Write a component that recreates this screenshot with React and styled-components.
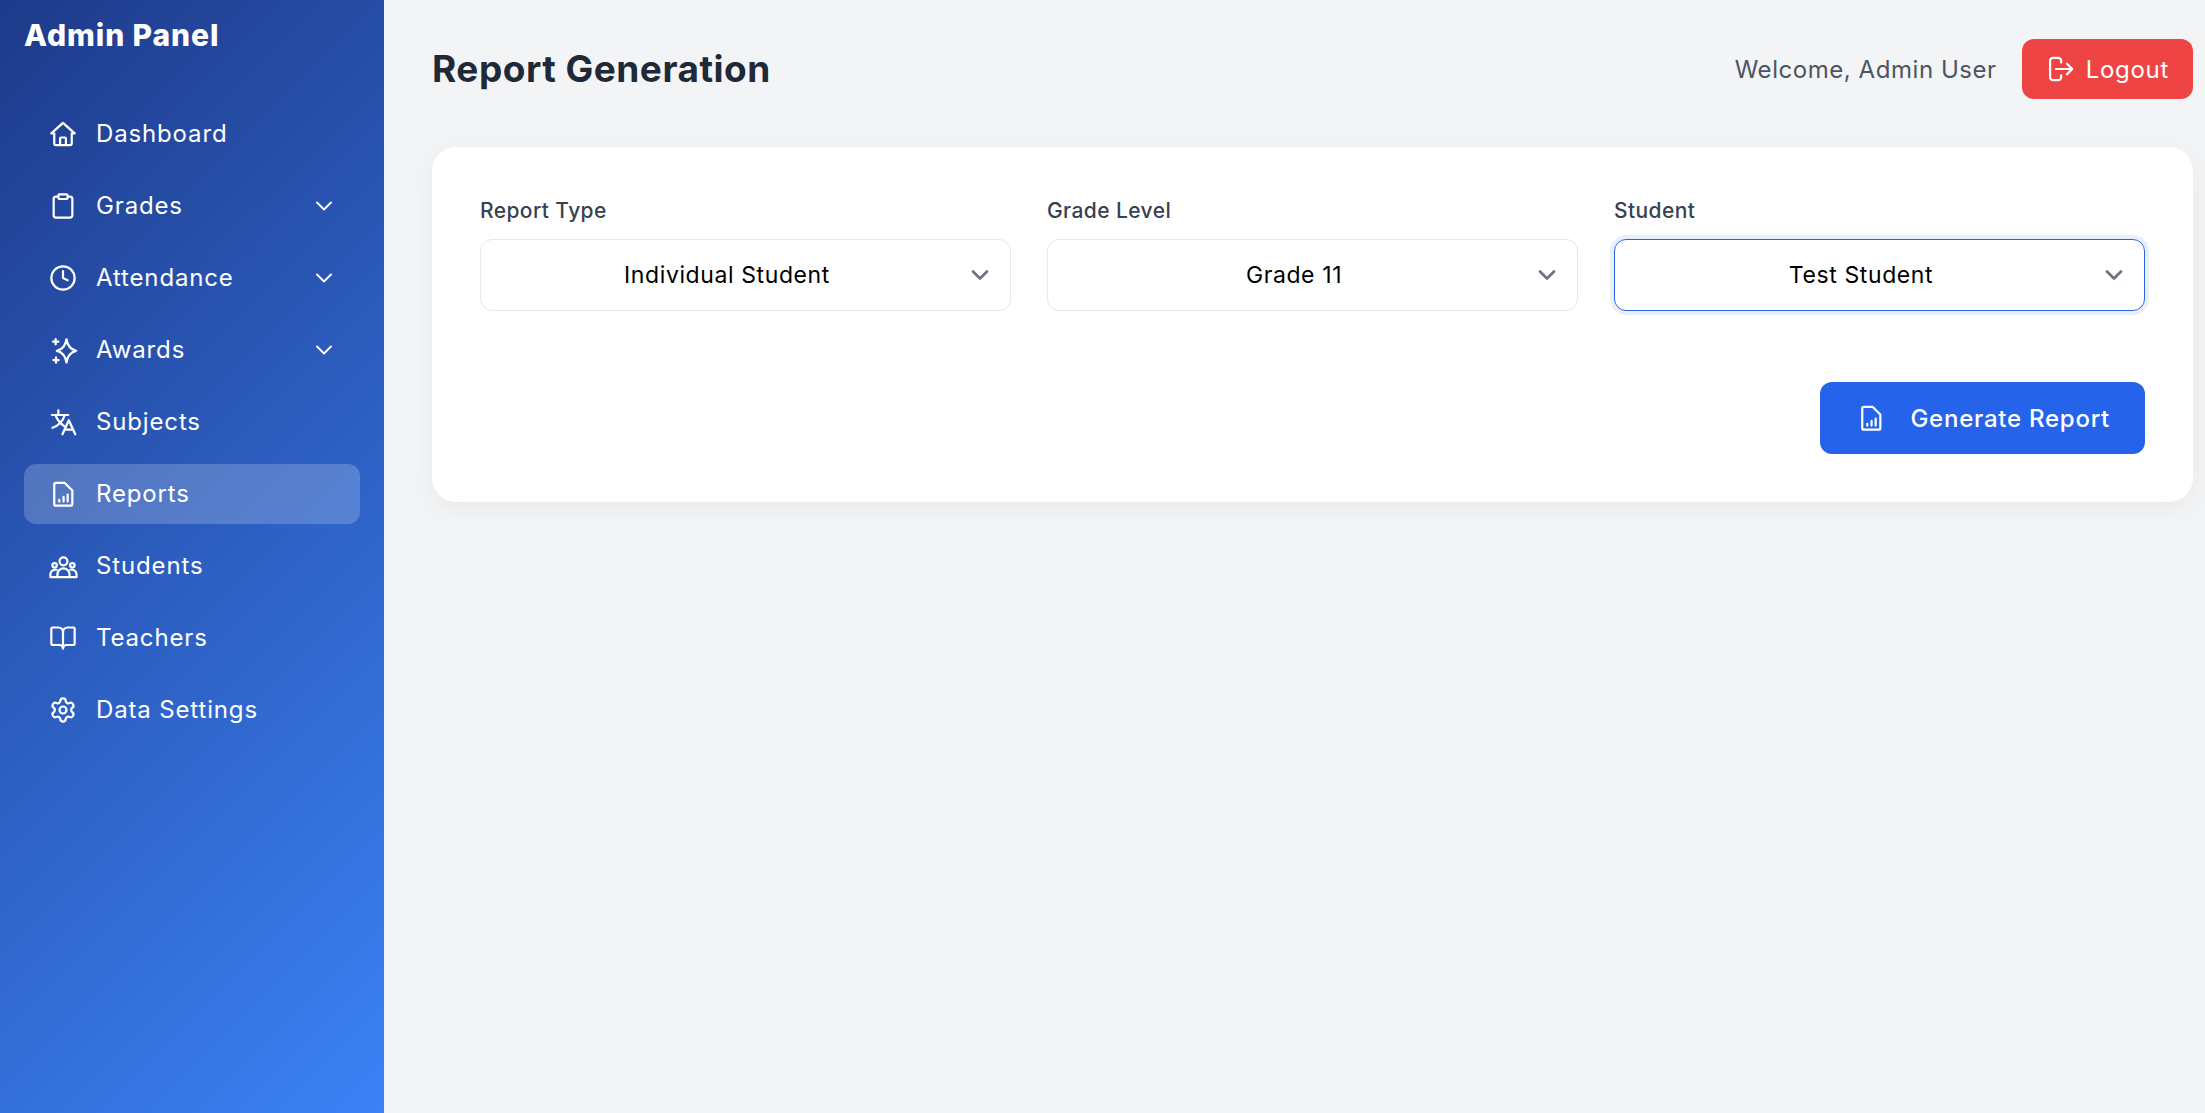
import React from 'react'
import styled, { createGlobalStyle } from 'styled-components'
import { Clipboard, Clock, BookOpen, Settings, ChevronDown } from 'lucide-react'

const GlobalStyle = createGlobalStyle`
    html, body {
        margin: 0;
        height: 100%;
        overflow: hidden;
    }
    body {
        font-family: 'Inter', 'Noto Sans', sans-serif;
        background-color: #F3F4F6;
    }
    * {
        box-sizing: border-box;
    }
`

const strokeProps = {
    viewBox: '0 0 24 24',
    fill: 'none',
    stroke: 'currentColor',
    strokeWidth: 1.9,
    strokeLinecap: 'round',
    strokeLinejoin: 'round',
}

function HomeIcon(props) {
    return (
        <svg {...strokeProps} {...props}>
            <path d="M12 2.5 2 11.5h2.5V20A1.5 1.5 0 0 0 6 21.5h12a1.5 1.5 0 0 0 1.5-1.5v-8.5H22z" />
            <path d="M9.5 21.5V16a1 1 0 0 1 1-1h3a1 1 0 0 1 1 1v5.5" />
        </svg>
    )
}

function SparkleIcon(props) {
    return (
        <svg {...strokeProps} {...props}>
            <path d="M15 2.8C15.8 8 18 11.5 23.3 12.7 18 14 15.8 17.5 15 22.7 14.2 17.5 12 14 6.7 12.7 12 11.5 14.2 8 15 2.8z" />
            <path d="M5.7 2.6v4.6M3.4 4.9H8" />
            <path d="M6 18.3v4.6M3.7 20.6h4.6" />
        </svg>
    )
}

function LanguageIcon(props) {
    return (
        <svg {...strokeProps} {...props}>
            <path d="M8 2v4M2.5 6h14" />
            <path d="M13.5 6c-1.5 5-5 9-10.5 11" />
            <path d="M5.5 6c1.5 4 4 7 7.5 9.5" />
            <path d="M11.5 22.5 17 10.5l5.500 12M13.3 18.500h7.400" />
        </svg>
    )
}

function PeopleIcon(props) {
    return (
        <svg {...strokeProps} {...props}>
            <circle cx="12.4" cy="8" r="3.4" />
            <circle cx="4.8" cy="11.4" r="1.9" />
            <circle cx="20" cy="11.4" r="1.9" />
            <path d="M7.2 21.5v-2.2a5.2 5.2 0 0 1 10.4 0v2.2" />
            <path d="M6.6 15.2C3.6 14.8 1.2 16.5 1.2 19v2.5h22.400V19c0-2.5-2.400-4.200-5.400-3.800" />
        </svg>
    )
}

function ReportIcon(props) {
    return (
        <svg {...strokeProps} {...props}>
            <path d="M6 2.5h7.5L20 9v11.5a1.5 1.5 0 0 1-1.5 1.5H6a1.5 1.5 0 0 1-1.5-1.5V4A1.5 1.5 0 0 1 6 2.500z" />
            <path d="M8.8 18.5V17M12.5 18.5v-4M16 18.5v-6" />
        </svg>
    )
}

function ExitIcon(props) {
    return (
        <svg {...strokeProps} {...props}>
            <path d="M13 6.5V5a2.5 2.5 0 0 0-2.5-2.5H6A2.5 2.5 0 0 0 3.500 5v14A2.500 2.500 0 0 0 6 21.5h4.5A2.5 2.5 0 0 0 13 19v-1.5" />
            <path d="M8.5 12h14M18 7.5l4.5 4.5-4.5 4.5" />
        </svg>
    )
}

const navItems = [
    { label: 'Dashboard', icon: HomeIcon },
    { label: 'Grades', icon: Clipboard, expandable: true },
    { label: 'Attendance', icon: Clock, expandable: true },
    { label: 'Awards', icon: SparkleIcon, expandable: true },
    { label: 'Subjects', icon: LanguageIcon },
    { label: 'Reports', icon: ReportIcon, active: true },
    { label: 'Students', icon: PeopleIcon },
    { label: 'Teachers', icon: BookOpen },
    { label: 'Data Settings', icon: Settings },
]

const filters = [
    { label: 'Report Type', value: 'Individual Student' },
    { label: 'Grade Level', value: 'Grade 11' },
    { label: 'Student', value: 'Test Student', focused: true },
]

function App() {
    return (
        <Layout>
            <GlobalStyle />
            <Sidebar>
                <Brand>Admin Panel</Brand>
                <Nav>
                    {navItems.map((item) => (
                        <NavItem key={item.label} $active={item.active}>
                            <NavIcon as={item.icon} strokeWidth={1.9} />
                            <NavLabel>{item.label}</NavLabel>
                            {item.expandable && <ChevronDown size={28} strokeWidth={1.6} />}
                        </NavItem>
                    ))}
                </Nav>
            </Sidebar>
            <Main>
                <Header>
                    <Title>Report Generation</Title>
                    <UserArea>
                        <Welcome>Welcome, Admin User</Welcome>
                        <LogoutButton>
                            <ButtonIcon as={ExitIcon} />
                            Logout
                        </LogoutButton>
                    </UserArea>
                </Header>
                <Card>
                    <FilterGrid>
                        {filters.map((filter) => (
                            <Field key={filter.label}>
                                <Label>{filter.label}</Label>
                                <Select $focused={filter.focused}>
                                    <SelectValue>{filter.value}</SelectValue>
                                    <SelectArrow as={ChevronDown} strokeWidth={2.3} />
                                </Select>
                            </Field>
                        ))}
                    </FilterGrid>
                    <Actions>
                        <GenerateButton>
                            <ButtonIcon as={ReportIcon} />
                            Generate Report
                        </GenerateButton>
                    </Actions>
                </Card>
            </Main>
        </Layout>
    )
}

const Layout = styled.div`
    display: flex;
    min-height: 100vh;
`

const Sidebar = styled.aside`
    width: 384px;
    flex-shrink: 0;
    padding: 14px 24px;
    color: white;
    background: linear-gradient(135deg, #1E3A8A, #3B82F6);
`

const Brand = styled.h2`
    margin: 0 0 48px;
    font-size: 30px;
    line-height: 42px;
    font-weight: 800;
    letter-spacing: 0.9px;
`

const Nav = styled.nav`
    display: flex;
    flex-direction: column;
    gap: 12px;
`

const NavItem = styled.a`
    display: flex;
    align-items: center;
    gap: 19px;
    height: 60px;
    padding: 0 22px 0 25px;
    border-radius: 12px;
    background-color: ${(props) => (props.$active ? 'rgba(255, 255, 255, 0.2)' : 'transparent')};
`

const NavIcon = styled.svg`
    width: 28px;
    height: 28px;
    flex-shrink: 0;
    overflow: visible;
`

const NavLabel = styled.span`
    flex: 1;
    font-size: 24px;
    line-height: 36px;
    letter-spacing: 0.85px;
`

const Main = styled.main`
    flex: 1;
    min-width: 0;
    padding: 39px 12px 0 48px;
`

const Header = styled.header`
    display: flex;
    align-items: center;
    justify-content: space-between;
    margin-bottom: 48px;
`

const Title = styled.h1`
    margin: 0;
    font-size: 37px;
    line-height: 54px;
    font-weight: 700;
    color: #1F2937;
    letter-spacing: 0.5px;
`

const UserArea = styled.div`
    display: flex;
    align-items: center;
    gap: 25px;
`

const Welcome = styled.span`
    font-size: 24px;
    color: #4B5563;
    letter-spacing: 0.55px;
`

const LogoutButton = styled.button`
    display: flex;
    align-items: center;
    gap: 12px;
    height: 60px;
    padding: 0 24px;
    border: 0;
    border-radius: 12px;
    background-color: #EF4444;
    color: white;
    font-family: inherit;
    font-size: 24px;
    letter-spacing: 0.7px;
`

const ButtonIcon = styled.svg`
    width: 28px;
    height: 28px;
    flex-shrink: 0;
`

const Card = styled.section`
    padding: 48px;
    border-radius: 24px;
    background-color: white;
    box-shadow: 0 6px 24px rgba(0, 0, 0, 0.05);
`

const FilterGrid = styled.div`
    display: grid;
    grid-template-columns: repeat(3, 1fr);
    gap: 36px;
`

const Field = styled.div`
    display: flex;
    flex-direction: column;
    gap: 12px;
`

const Label = styled.label`
    font-size: 21px;
    line-height: 32px;
    font-weight: 500;
    color: #374151;
    letter-spacing: 0.4px;
`

const Select = styled.div`
    display: flex;
    align-items: center;
    height: 72px;
    padding: 0 16px 0 7px;
    border: 1.5px solid ${(props) => (props.$focused ? '#2563EB' : '#E5E7EB')};
    border-radius: 12px;
    box-shadow: ${(props) => (props.$focused ? '0 0 0 4px rgba(37, 99, 235, 0.1)' : 'none')};
`

const SelectValue = styled.span`
    flex: 1;
    text-align: center;
    font-size: 23px;
    color: black;
    letter-spacing: 0.6px;
`

const SelectArrow = styled.svg`
    width: 28px;
    height: 28px;
    color: #6B7280;
`

const Actions = styled.div`
    display: flex;
    justify-content: flex-end;
    margin-top: 71px;
`

const GenerateButton = styled.button`
    display: flex;
    align-items: center;
    gap: 25px;
    height: 72px;
    padding: 0 35px 0 37px;
    border: 0;
    border-radius: 12px;
    background-color: #2563EB;
    color: white;
    font-family: inherit;
    font-size: 24px;
    font-weight: 500;
    letter-spacing: 0.75px;
`

export default App
